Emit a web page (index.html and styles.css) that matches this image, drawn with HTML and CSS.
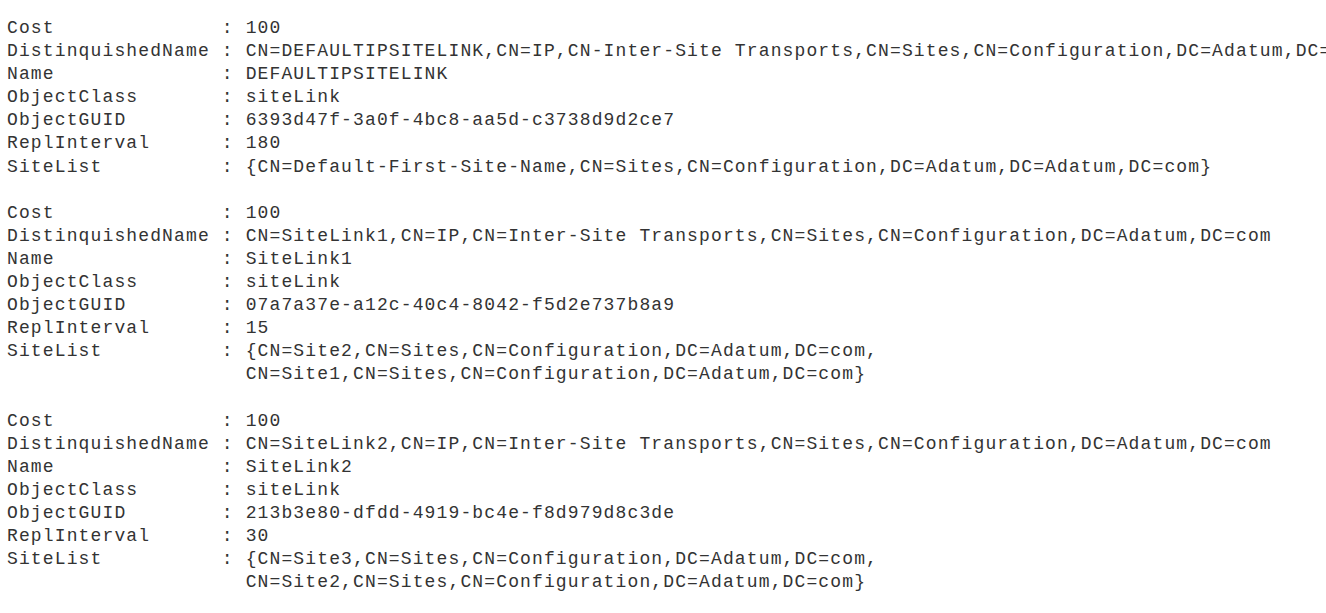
FILE: index.html
```html
<!DOCTYPE html>
<html>
<head>
<meta charset="utf-8">
<link rel="stylesheet" href="styles.css">
</head>
<body>
<pre class="console">Cost              : 100
DistinquishedName : CN=DEFAULTIPSITELINK,CN=IP,CN-Inter-Site Transports,CN=Sites,CN=Configuration,DC=Adatum,DC=Adatum,DC=com
Name              : DEFAULTIPSITELINK
ObjectClass       : siteLink
ObjectGUID        : 6393d47f-3a0f-4bc8-aa5d-c3738d9d2ce7
ReplInterval      : 180
SiteList          : {CN=Default-First-Site-Name,CN=Sites,CN=Configuration,DC=Adatum,DC=Adatum,DC=com}

Cost              : 100
DistinquishedName : CN=SiteLink1,CN=IP,CN=Inter-Site Transports,CN=Sites,CN=Configuration,DC=Adatum,DC=com
Name              : SiteLink1
ObjectClass       : siteLink
ObjectGUID        : 07a7a37e-a12c-40c4-8042-f5d2e737b8a9
ReplInterval      : 15
SiteList          : {CN=Site2,CN=Sites,CN=Configuration,DC=Adatum,DC=com,
                    CN=Site1,CN=Sites,CN=Configuration,DC=Adatum,DC=com}

Cost              : 100
DistinquishedName : CN=SiteLink2,CN=IP,CN=Inter-Site Transports,CN=Sites,CN=Configuration,DC=Adatum,DC=com
Name              : SiteLink2
ObjectClass       : siteLink
ObjectGUID        : 213b3e80-dfdd-4919-bc4e-f8d979d8c3de
ReplInterval      : 30
SiteList          : {CN=Site3,CN=Sites,CN=Configuration,DC=Adatum,DC=com,
                    CN=Site2,CN=Sites,CN=Configuration,DC=Adatum,DC=com}</pre>
</body>
</html>
```
FILE: styles.css
```css
html, body {
  margin: 0;
  padding: 0;
  background: #ffffff;
  overflow: hidden;
}
.console {
  margin: 0;
  padding: 17px 0 0 7px;
  font-family: "Courier New", "Nimbus Mono PS", "Nimbus Mono L", "FreeMono", "Liberation Mono", monospace;
  font-size: 18px;
  letter-spacing: 1.13px;
  line-height: 23.1px;
  color: #333333;
  white-space: pre;
}
```
